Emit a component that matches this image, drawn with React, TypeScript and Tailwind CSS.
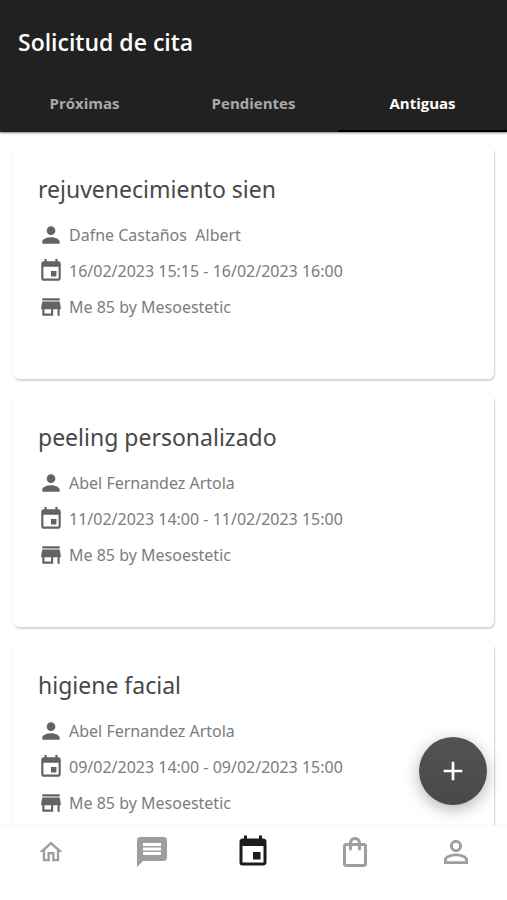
import React, { useState } from "react";
import { IconType } from "react-icons";
import {
  MdAdd,
  MdEvent,
  MdMessage,
  MdOutlineHome,
  MdOutlineShoppingBag,
  MdPerson,
  MdPersonOutline,
  MdStore
} from "react-icons/md";

interface Appointment {
  id: number;
  treatment: string;
  professional: string;
  date: string;
  center: string;
}

interface NavItem {
  label: string;
  icon: IconType;
  size: number;
}

const tabs = ["Próximas", "Pendientes", "Antiguas"];

const appointments: Appointment[] = [
  {
    id: 1,
    treatment: "rejuvenecimiento sien",
    professional: "Dafne Castaños  Albert",
    date: "16/02/2023 15:15 - 16/02/2023 16:00",
    center: "Me 85 by Mesoestetic"
  },
  {
    id: 2,
    treatment: "peeling personalizado",
    professional: "Abel Fernandez Artola",
    date: "11/02/2023 14:00 - 11/02/2023 15:00",
    center: "Me 85 by Mesoestetic"
  },
  {
    id: 3,
    treatment: "higiene facial",
    professional: "Abel Fernandez Artola",
    date: "09/02/2023 14:00 - 09/02/2023 15:00",
    center: "Me 85 by Mesoestetic"
  }
];

const navItems: NavItem[] = [
  { label: "Inicio", icon: MdOutlineHome, size: 28 },
  { label: "Mensajes", icon: MdMessage, size: 36 },
  { label: "Citas", icon: MdEvent, size: 36 },
  { label: "Tienda", icon: MdOutlineShoppingBag, size: 36 },
  { label: "Perfil", icon: MdPersonOutline, size: 36 }
];

const InfoRow: React.FC<{ icon: IconType; text: string }> = ({ icon: Icon, text }) => (
  <li className="flex h-9 items-center gap-[5px]">
    <Icon size={26} className="shrink-0 text-[#636363]" />
    <span className="whitespace-pre text-base text-[#7c7c7c]">{text}</span>
  </li>
);

const AppointmentCard: React.FC<{ appointment: Appointment }> = ({ appointment }) => (
  <article className="rounded-md bg-white px-[25px] pt-6 pb-[54px] shadow-[1px_2px_2px_rgba(0,0,0,0.16),0_0_2px_rgba(0,0,0,0.08)]">
    <h2 className="mb-2.5 text-[23px] leading-9 text-[#484848]">{appointment.treatment}</h2>
    <ul>
      <InfoRow icon={MdPerson} text={appointment.professional} />
      <InfoRow icon={MdEvent} text={appointment.date} />
      <InfoRow icon={MdStore} text={appointment.center} />
    </ul>
  </article>
);

const App: React.FC = () => {
  const [activeTab, setActiveTab] = useState("Antiguas");
  const [activeNav, setActiveNav] = useState("Citas");

  return (
    <div className="flex h-screen flex-col bg-white font-['Noto_Sans','Open_Sans',sans-serif]">
      <header className="z-10 bg-[#212121] font-['Open_Sans',sans-serif] shadow-[0_1px_2px_rgba(0,0,0,0.5)]">
        <h1 className="px-[18px] pt-6 pb-4 text-[23px] leading-9 font-semibold text-white">Solicitud de cita</h1>
        <div role="tablist" className="grid grid-cols-3">
          {tabs.map(tab => (
            <button
              key={tab}
              role="tab"
              aria-selected={tab === activeTab}
              onClick={() => setActiveTab(tab)}
              className={`h-14 border-b-2 text-[15px] font-bold ${
                tab === activeTab ? "border-black text-white" : "border-transparent text-[#a9a9a9]"
              }`}
            >
              {tab}
            </button>
          ))}
        </div>
      </header>

      <div className="relative min-h-0 flex-1">
        <main className="flex h-full flex-col gap-4 overflow-y-auto px-[13px] py-[15px] [scrollbar-width:none]">
          {appointments.map(appointment => (
            <AppointmentCard key={appointment.id} appointment={appointment} />
          ))}
        </main>
        <button
          aria-label="Nueva cita"
          className="absolute right-5 bottom-5 flex size-[68px] items-center justify-center rounded-full bg-linear-to-b from-[#525252] to-[#494949] text-white shadow-[0_4px_16px_rgba(0,0,0,0.3)]"
        >
          <MdAdd size={32} />
        </button>
      </div>

      <nav className="grid grid-cols-5 border-t border-[#f5f5f5] bg-white pb-[22px]">
        {navItems.map(({ label, icon: Icon, size }) => (
          <a
            key={label}
            href="#"
            aria-label={label}
            onClick={() => setActiveNav(label)}
            className={`flex h-[52px] items-center justify-center ${
              label === activeNav ? "text-[#1c1c1c]" : "text-[#9e9e9e]"
            }`}
          >
            <Icon size={size} />
          </a>
        ))}
      </nav>
    </div>
  );
};

export default App;
